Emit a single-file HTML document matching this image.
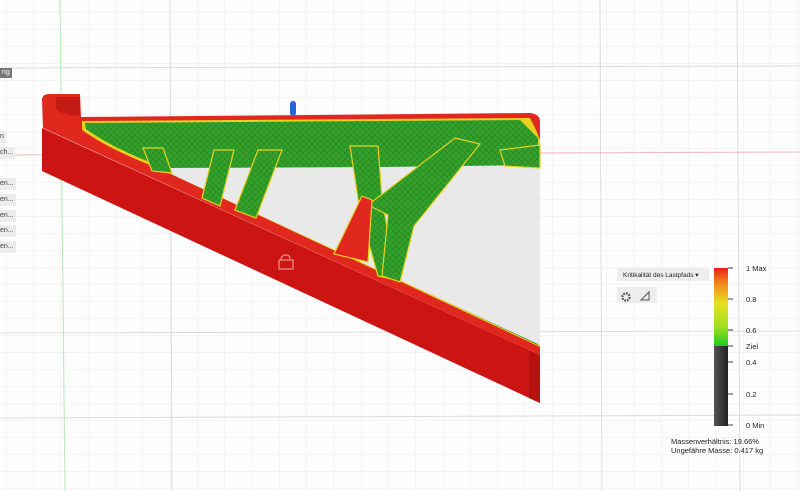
<!DOCTYPE html>
<html><head><meta charset="utf-8"><style>
html,body{margin:0;padding:0;width:800px;height:491px;overflow:hidden;background:#fdfdfd;font-family:"Liberation Sans",sans-serif}
.t{position:absolute;font-size:7.5px;color:#222}
.b{position:absolute;left:0;background:#ececec;font-size:7px;color:#444;padding:1px 2px 1px 0;height:10px;line-height:10px}
</style></head><body>
<svg width="800" height="491" style="position:absolute;left:0;top:0">
<defs>
<pattern id="gv" width="27.3" height="17" patternUnits="userSpaceOnUse" x="6" y="12">
<path d="M0 0V17M0 0H27.3" stroke="#ececec" stroke-width="1" fill="none"/>
</pattern>
<pattern id="mesh" width="6" height="6" patternUnits="userSpaceOnUse">
<rect width="6" height="6" fill="#33a02c"/>
<path d="M0 0L6 6M6 0L0 6" stroke="#1f7a1c" stroke-width="0.5"/>
</pattern>
<linearGradient id="lg" x1="0" y1="0" x2="0" y2="1">
<stop offset="0" stop-color="#e8201a"/><stop offset="0.2" stop-color="#f08a1a"/>
<stop offset="0.45" stop-color="#e8e020"/><stop offset="0.75" stop-color="#a0e020"/><stop offset="1" stop-color="#20c820"/>
</linearGradient>
<linearGradient id="dk" x1="0" y1="0" x2="1" y2="0">
<stop offset="0" stop-color="#555"/><stop offset="0.5" stop-color="#3a3a3a"/><stop offset="1" stop-color="#222"/>
</linearGradient>
</defs>
<rect width="800" height="491" fill="url(#gv)"/>
<g stroke="#dcdcdc" stroke-width="1">
<line x1="0" y1="333" x2="800" y2="331"/><line x1="0" y1="418" x2="800" y2="415"/>
<line x1="0" y1="68" x2="800" y2="66"/>
<line x1="600" y1="0" x2="602" y2="491"/><line x1="737" y1="0" x2="740" y2="491"/><line x1="170" y1="0" x2="172" y2="491"/>
</g>
<line x1="0" y1="155" x2="800" y2="152" stroke="#f0b8b8" stroke-width="1"/>
<line x1="60" y1="0" x2="65" y2="491" stroke="#b8e8b8" stroke-width="1"/>

<rect x="290" y="101" width="6" height="15" rx="3" fill="#2a62d8"/>
<path d="M42 100 Q42 94 50 94 L80 94 L81 117 L530 113 Q540 114 540 122 L540 355 L43 128 Z" fill="#e0281e"/>
<path d="M56 97 L80 97 L80 116 Q60 115 56 108 Z" fill="#c41a14"/>
<path d="M42 128 L540 355 L540 403 L42 171 Z" fill="#cc1512"/>
<path d="M529 351 L540 356 L540 403 L529 398 Z" fill="#b51210"/>
<path d="M82 121 L530 118 L536 130 L540 140 L540 347 L158 168 Q110 150 82 130 Z" fill="#e8d020"/>
<path d="M85 123 L520 120 L538 138 L538 345 L160 166 Q112 148 86 129 Z" fill="url(#mesh)"/>
<path d="M158 168 L380 167 L540 165 L540 345 Z" fill="#e9e9e9"/>
<path d="M160 170 L540 347 L540 352 L155 172 Z" fill="#e0281e"/>
<g fill="url(#mesh)" stroke="#e8d020" stroke-width="1.2">
<path d="M143 148 L163 148 L172 173 L152 171 Z"/>
<path d="M214 150 L234 150 L220 206 L202 198 Z"/>
<path d="M258 150 L282 150 L256 218 L235 210 Z"/>
<path d="M350 146 L378 146 L382 198 L396 280 L378 276 L360 212 Z"/>
<path d="M455 138 L480 144 L414 226 L400 282 L382 276 L388 215 L368 205 Z"/>
<path d="M500 150 L540 145 L540 168 L505 166 Z"/>
</g>
<path d="M362 196 L372 200 L368 262 L334 254 Z" fill="#e0281e" stroke="#e8d020" stroke-width="1.2"/>
<g fill="none" stroke="#f0b0a8" stroke-width="1"><rect x="279" y="260" width="14" height="9"/><path d="M281 260 Q281 255 286 255 Q290 255 290 259"/></g>

<rect x="714" y="268" width="14" height="78" fill="url(#lg)"/>
<rect x="714" y="346" width="14" height="80" fill="url(#dk)"/>
<g stroke="#444" stroke-width="1">
<line x1="728" y1="268" x2="733" y2="268"/><line x1="728" y1="299" x2="733" y2="299"/><line x1="728" y1="330" x2="733" y2="330"/>
<line x1="728" y1="346" x2="733" y2="346"/><line x1="728" y1="362" x2="733" y2="362"/><line x1="728" y1="394" x2="733" y2="394"/><line x1="728" y1="425" x2="733" y2="425"/>
</g>
<rect x="617" y="268" width="92" height="13" fill="#ededed"/>
<rect x="617" y="287" width="40" height="16" fill="#ededed"/>
<g transform="translate(626,297)"><circle r="3.6" fill="none" stroke="#555" stroke-width="2.2" stroke-dasharray="1.8 1"/><circle r="1.3" fill="#ededed"/></g>
<path d="M641 300 L649 292 L649 300 Z" fill="none" stroke="#555" stroke-width="1"/>
</svg>
<div class="t" style="left:623px;top:271px;font-size:6.5px">Kritikalität des Lastpfads ▾</div>
<div class="t" style="left:746px;top:264px">1 Max</div>
<div class="t" style="left:746px;top:295px">0.8</div>
<div class="t" style="left:746px;top:326px">0.6</div>
<div class="t" style="left:746px;top:342px">Ziel</div>
<div class="t" style="left:746px;top:358px">0.4</div>
<div class="t" style="left:746px;top:390px">0.2</div>
<div class="t" style="left:746px;top:421px">0 Min</div>
<div class="t" style="left:671px;top:437px">Massenverhältnis: 19.66%</div>
<div class="t" style="left:671px;top:446px">Ungefähre Masse: 0.417 kg</div>
<div class="b" style="top:68px;background:#777;color:#fff;padding:0 2px">ng</div>
<div class="b" style="top:131px">n</div>
<div class="b" style="top:147px">ch...</div>
<div class="b" style="top:178px">en...</div>
<div class="b" style="top:194px">en...</div>
<div class="b" style="top:210px">en...</div>
<div class="b" style="top:225px">en...</div>
<div class="b" style="top:241px">en...</div>
</body></html>
